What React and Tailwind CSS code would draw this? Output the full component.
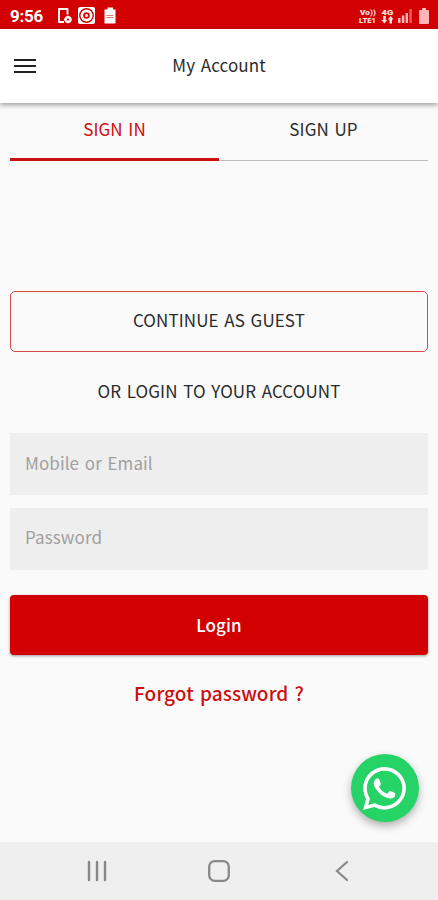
import React, { useState } from 'react';
import { FaWhatsapp } from 'react-icons/fa';

const tabs = [
  { id: 'signin', label: 'SIGN IN' },
  { id: 'signup', label: 'SIGN UP' },
];

function StatusBar() {
  return (
    <div className="h-[29px] shrink-0 bg-[#d20000] text-white flex items-center justify-between pl-[10px] pr-[8px]">
      <div className="flex items-center h-full">
        <span className="w-[33px] font-[Roboto] text-[17px] leading-[30px] font-bold tracking-[-0.3px] pt-[2px]">9:56</span>
        <svg width="64" height="20" viewBox="0 0 64 20" fill="none" className="ml-[13px] mt-[2px]">
          {/* Phone with a gear */}
          <path d="M8 16H3V3H11.500V8.500" stroke="white" strokeWidth="1.900" strokeLinejoin="round" />
          <circle cx="12" cy="13.500" r="2.600" stroke="white" strokeWidth="2" />
          <path d="M12 9.700V17.300M8.200 13.500H15.800" stroke="white" strokeWidth="1.600" />
          <circle cx="12" cy="13.500" r="1.100" fill="#d20000" />
          {/* Camera */}
          <rect x="22" y="1" width="17" height="17" rx="2" fill="white" />
          <circle cx="30.500" cy="9.500" r="6.700" stroke="#d20000" strokeWidth="1.400" />
          <circle cx="30.500" cy="9.500" r="2.400" stroke="#d20000" strokeWidth="1.800" />
          {/* Battery saver */}
          <path d="M51.500 1.500H57V3.500H59.500V17.500H48.500V3.500H51.500Z" fill="white" />
          <path d="M50.500 9.500H57.500M50.500 11.500H57.500" stroke="#e87575" strokeWidth="1" />
        </svg>
      </div>

      <div className="flex items-center h-full pt-[2px] text-[#ffe3e3] font-[Roboto] font-black">
        <svg width="20" height="17" viewBox="0 0 20 17" fill="currentColor" className="font-[Roboto] font-black">
          <text x="2" y="7.500" fontSize="8" textLength="16" lengthAdjust="spacingAndGlyphs">Vo))</text>
          <text x="1" y="16" fontSize="8" textLength="17" lengthAdjust="spacingAndGlyphs">LTE1</text>
        </svg>
        <svg width="13" height="17" viewBox="0 0 13 17" fill="currentColor" className="ml-[3px] font-[Roboto] font-black">
          <text x="0.500" y="7.500" fontSize="8" textLength="12" lengthAdjust="spacingAndGlyphs">4G</text>
          <path d="M0.500 13H2.200V9H4.700V13H6.200L3.400 16.500ZM6.800 12.500L9.700 9L12.500 12.500H11V16.500H8.500V12.500Z" />
        </svg>
        <svg width="14" height="14" viewBox="0 0 14 14" className="ml-[4px]">
          <path d="M0 9H2.500V14H0ZM3.800 6.500H6.300V14H3.800ZM7.600 4H10V14H7.600Z" fill="#ffb5b5" />
          <path d="M11.300 0H13.800V14H11.300Z" fill="#e65c5c" />
        </svg>
        <svg width="10" height="16" viewBox="0 0 10 16" fill="#ffb5b5" className="mr-[1px] ml-[7px]">
          <path d="M3 0H7V2H9Q10 2 10 3V15Q10 16 9 16H1Q0 16 0 15V3Q0 2 1 2H3Z" />
        </svg>
      </div>
    </div>
  );
}

function Header() {
  return (
    <header className="relative h-[74px] shrink-0 bg-white shadow-[0_2px_5px_rgba(0,0,0,0.38)] grid grid-cols-[1fr_auto_1fr] items-center px-[14px]">
      <button aria-label="Menu" className="flex flex-col gap-[4px] w-[22px]">
        <span className="h-[2px] w-full bg-[#222]" />
        <span className="h-[2px] w-full bg-[#222]" />
        <span className="h-[2px] w-full bg-[#222]" />
      </button>
      <h1 className="pb-[2px] text-[17px] text-[#2b2b2b]">My Account</h1>
    </header>
  );
}

function NavBar() {
  return (
    <nav className="h-[58px] shrink-0 bg-[#efefef] flex items-center justify-center gap-[101px] text-[#888]">
      <svg width="22" height="22" viewBox="0 0 22 22" stroke="currentColor" strokeWidth="2.400" strokeLinecap="round">
        <path d="M4 2V20M12 2V20M20 2V20" />
      </svg>
      <svg width="22" height="22" viewBox="0 0 22 22" fill="none" stroke="currentColor" strokeWidth="2.300">
        <rect x="1.200" y="1.200" width="19.600" height="19.600" rx="5.500" />
      </svg>
      <svg width="22" height="22" viewBox="0 0 22 22" fill="none" stroke="currentColor" strokeWidth="2.200" strokeLinecap="round">
        <path d="M16 2L6 11L16 20" />
      </svg>
    </nav>
  );
}

export default function App() {
  const [activeTab, setActiveTab] = useState('signin');

  return (
    <div className="relative h-[900px] w-full bg-[#fafafa] flex flex-col overflow-hidden font-['Noto_Sans_CJK_JP','Noto_Sans',sans-serif] text-[#2b2b2b] tracking-[0.1px] [word-spacing:1.7px]">
      <StatusBar />
      <Header />

      <main className="flex-1 px-[10px] flex flex-col">
        {/* Tabs */}
        <div className="flex h-[58px]">
          {tabs.map((tab) => (
            <button
              key={tab.id}
              onClick={() => setActiveTab(tab.id)}
              className={
                activeTab === tab.id
                  ? 'flex-1 pb-[3px] text-[17px] tracking-[0.1px] [word-spacing:1.7px] text-[#d20a0a] border-b-[3px] border-[#cc1111]'
                  : 'flex-1 pb-[5px] text-[17px] tracking-[0.1px] [word-spacing:1.7px] border-b border-[#bdbdbd]'
              }
            >
              {tab.label}
            </button>
          ))}
        </div>

        <button className="mt-[130px] h-[61px] shrink-0 rounded-[5px] border border-[#d84a4a] pb-[3px] text-[17px] tracking-[0.1px] [word-spacing:1.7px]">
          CONTINUE AS GUEST
        </button>

        <p className="mt-[26px] text-center text-[17px] leading-[26px]">OR LOGIN TO YOUR ACCOUNT</p>

        <input
          type="text"
          placeholder="Mobile or Email"
          className="mt-[29px] h-[62px] shrink-0 bg-[#eee] px-[15px] pb-[4px] text-[17px] tracking-[0.1px] [word-spacing:1.7px] placeholder:text-[#a0a0a0] outline-none"
        />
        <input
          type="password"
          placeholder="Password"
          className="mt-[13px] h-[62px] shrink-0 bg-[#eee] px-[15px] pb-[5px] text-[17px] tracking-[0.1px] [word-spacing:1.7px] placeholder:text-[#a0a0a0] outline-none"
        />

        <button className="mt-[25px] h-[60px] shrink-0 rounded-[4px] bg-[#d20000] text-white text-[17px] font-medium shadow-[0_1px_3px_rgba(0,0,0,0.4)]">
          Login
        </button>

        <a className="mt-[24px] text-center text-[19px] leading-[28px] font-medium text-[#cc0e0e]">Forgot password ?</a>
      </main>

      <button
        aria-label="WhatsApp"
        className="absolute right-[19px] bottom-[78px] size-[68px] rounded-full bg-[#25d366] text-white flex items-center justify-center pr-[1px] shadow-[0_4px_8px_rgba(0,0,0,0.3)]"
      >
        <FaWhatsapp size={49} />
      </button>

      <NavBar />
    </div>
  );
}
